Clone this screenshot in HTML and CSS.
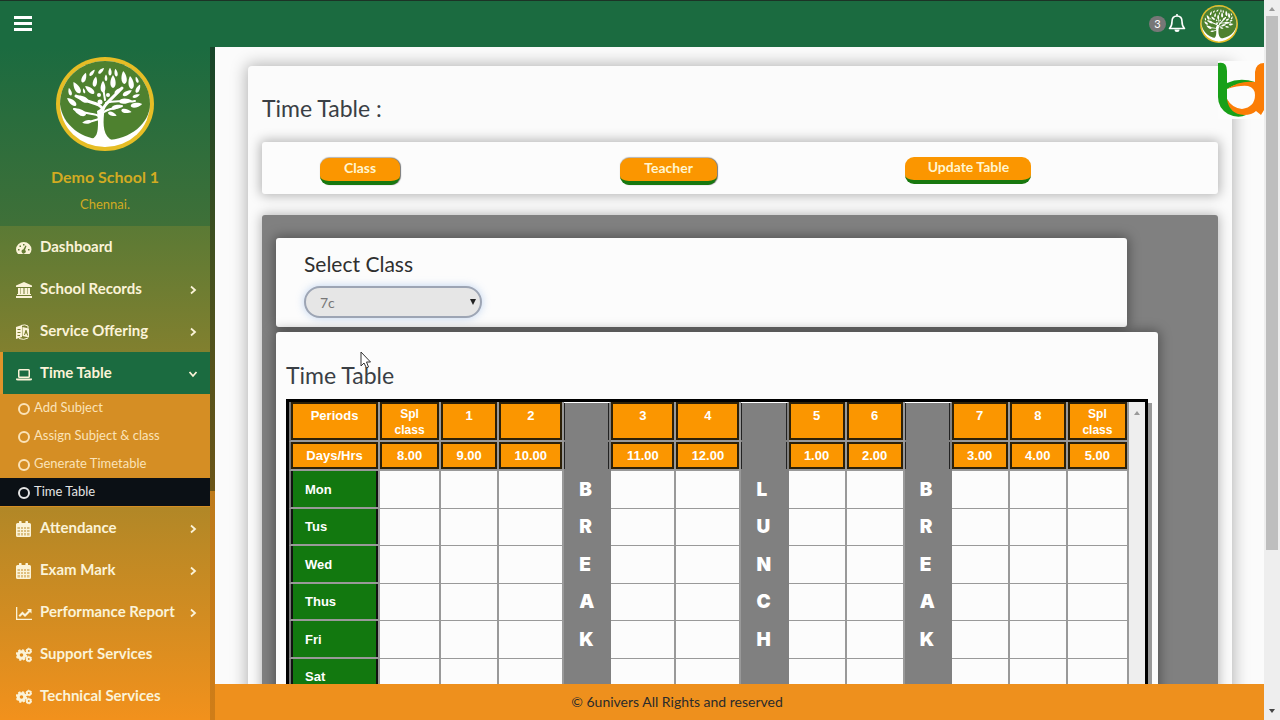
FILE: index.html
```html
<!DOCTYPE html>
<html lang="en">
<head>
<meta charset="utf-8">
<title>Time Table</title>
<link rel="stylesheet" href="styles.css">
</head>
<body>
<svg class="defs" aria-hidden="true">
  <symbol id="tree" viewBox="0 0 98 94">
    <ellipse cx="49" cy="47" rx="49" ry="47" fill="#e6bd25"/>
    <ellipse cx="49" cy="47" rx="45" ry="43" fill="#fff"/>
    <path d="M4 47C4 23 24 4 49 4S94 23 94 47C94 66 74 83 50 83S6 68 4 47Z" fill="#4e812f"/>
    <g fill="#fff">
      <path d="M33 83C41 81 42 76 42 65L41 54L46 51L48 57C47 68 47 79 57 84L49 90Z"/>
      <g fill="none" stroke="#fff" stroke-linecap="round">
        <path d="M45 60C46 48 52 46 66 31M47 53C44 45 34 47 20 39" stroke-width="3"/>
        <path d="M44 60C38 55 32 59 18 52M50 46C60 42 70 46 79 44M49 43L47 30M46 57C52 50 58 53 66 49M43 62L33 65" stroke-width="2"/>
      </g>
      <g>
        <path transform="translate(45 14) rotate(45) scale(.6)" d="M0-7C3-3 4 5 0 6C-4 5-3-3 0-7Z"/>
        <path transform="translate(54 15) scale(.6)" d="M0-7C3-3 4 5 0 6C-4 5-3-3 0-7Z"/>
        <path transform="translate(60 16) rotate(-8) scale(.6)" d="M0-7C3-3 4 5 0 6C-4 5-3-3 0-7Z"/>
        <path transform="translate(36 16) rotate(40) scale(.6)" d="M0-7C3-3 4 5 0 6C-4 5-3-3 0-7Z"/>
        <path transform="translate(28 21) rotate(20) scale(.8)" d="M0-7C3-3 4 5 0 6C-4 5-3-3 0-7Z"/>
        <path transform="translate(68 21) rotate(-6)" d="M0-7C3-3 4 5 0 6C-4 5-3-3 0-7Z"/>
        <path transform="translate(50 21) scale(.5)" d="M0-7C3-3 4 5 0 6C-4 5-3-3 0-7Z"/>
        <path transform="translate(81 23) rotate(-20) scale(.5)" d="M0-7C3-3 4 5 0 6C-4 5-3-3 0-7Z"/>
        <path transform="translate(75 26) rotate(-8)" d="M0-7C3-3 4 5 0 6C-4 5-3-3 0-7Z"/>
        <path transform="translate(39 25) rotate(10) scale(.8)" d="M0-7C3-3 4 5 0 6C-4 5-3-3 0-7Z"/>
        <path transform="translate(57 25)" d="M0-7C3-3 4 5 0 6C-4 5-3-3 0-7Z"/>
        <path transform="translate(21 31) rotate(-30)" d="M0-7C3-3 4 5 0 6C-4 5-3-3 0-7Z"/>
        <path transform="translate(47 30) scale(.9)" d="M0-7C3-3 4 5 0 6C-4 5-3-3 0-7Z"/>
        <path transform="translate(34 33) rotate(-50) scale(.9)" d="M0-7C3-3 4 5 0 6C-4 5-3-3 0-7Z"/>
        <path transform="translate(14 35) rotate(-15) scale(.6)" d="M0-7C3-3 4 5 0 6C-4 5-3-3 0-7Z"/>
        <path transform="translate(28 34) rotate(-15) scale(.4)" d="M0-7C3-3 4 5 0 6C-4 5-3-3 0-7Z"/>
        <path transform="translate(82 32) rotate(25) scale(.7)" d="M0-7C3-3 4 5 0 6C-4 5-3-3 0-7Z"/>
        <path transform="translate(71 36) rotate(60) scale(.8)" d="M0-7C3-3 4 5 0 6C-4 5-3-3 0-7Z"/>
        <path transform="translate(62 34) rotate(50) scale(.7)" d="M0-7C3-3 4 5 0 6C-4 5-3-3 0-7Z"/>
        <path transform="translate(80 39) rotate(70) scale(.6)" d="M0-7C3-3 4 5 0 6C-4 5-3-3 0-7Z"/>
        <path transform="translate(16 45) rotate(-50) scale(.9)" d="M0-7C3-3 4 5 0 6C-4 5-3-3 0-7Z"/>
        <path transform="translate(27 42) rotate(-62)" d="M0-7C3-3 4 5 0 6C-4 5-3-3 0-7Z"/>
        <path transform="translate(69 44) rotate(85)" d="M0-7C3-3 4 5 0 6C-4 5-3-3 0-7Z"/>
        <path transform="translate(80 48) rotate(80) scale(.9)" d="M0-7C3-3 4 5 0 6C-4 5-3-3 0-7Z"/>
        <path transform="translate(60 50) rotate(70) scale(.8)" d="M0-7C3-3 4 5 0 6C-4 5-3-3 0-7Z"/>
        <path transform="translate(70 54) rotate(100) scale(.8)" d="M0-7C3-3 4 5 0 6C-4 5-3-3 0-7Z"/>
        <path transform="translate(24 55) rotate(-62) scale(1.1)" d="M0-7C3-3 4 5 0 6C-4 5-3-3 0-7Z"/>
        <path transform="translate(31 65) rotate(-100) scale(.7)" d="M0-7C3-3 4 5 0 6C-4 5-3-3 0-7Z"/>
        <path transform="translate(56 57) rotate(110) scale(.7)" d="M0-7C3-3 4 5 0 6C-4 5-3-3 0-7Z"/>
        <circle cx="44" cy="45" r="2.5"/><circle cx="52" cy="38" r="2"/><circle cx="43" cy="38" r="2"/>
      </g>
    </g>
  </symbol>
  <symbol id="chev" viewBox="0 0 8 10"><path d="M2 1.500L6 5L2 8.500" fill="none" stroke="currentColor" stroke-width="1.800"/></symbol>
  <symbol id="cal" viewBox="0 0 16 16">
    <path fill-rule="evenodd" d="M1.500 2H3V1a1.300 1.300 0 0 1 2.600 0V2H9.400V1A1.300 1.300 0 0 1 12 1V2H13.500Q15 2 15 3.500V14.500Q15 16 13.500 16H1.500Q0 16 0 14.500V3.500Q0 2 1.500 2ZM1.500 6V8H4V6ZM5 6V8H7V6ZM8 6V8H10V6ZM11 6V8H13.500V6ZM1.500 9V11H4V9ZM5 9V11H7V9ZM8 9V11H10V9ZM11 9V11H13.500V9ZM1.500 12V14.500H4V12ZM5 12V14.500H7V12ZM8 12V14.500H10V12ZM11 12V14.500H13.500V12Z"/>
    <path d="M1 6H14V15H1Z" opacity=".5"/>
  </symbol>
  <symbol id="cogs" viewBox="0 0 16 16">
    <g fill="none" stroke="currentColor">
      <circle cx="5.500" cy="8" r="3.300" stroke-width="3"/>
      <circle cx="5.500" cy="8" r="5" stroke-width="1.600" stroke-dasharray="2.200 1.727"/>
      <circle cx="12.800" cy="4" r="1.900" stroke-width="1.900"/><circle cx="12.800" cy="4" r="2.800" stroke-width="1" stroke-dasharray="1.600 1.330"/>
      <circle cx="12.800" cy="12" r="1.900" stroke-width="1.900"/><circle cx="12.800" cy="12" r="2.800" stroke-width="1" stroke-dasharray="1.600 1.330"/>
    </g>
  </symbol>
</svg>

<div class="app">
  <header class="topbar">
    <button class="icon-button" aria-label="Toggle menu">
      <svg width="18" height="16" viewBox="0 0 18 16" fill="#fff"><path d="M0 0H18V3H0ZM0 6H18V9H0ZM0 12H18V15H0Z"/></svg>
    </button>
    <div class="account">
      <span class="count">3</span>
      <button class="icon-button" aria-label="Notifications">
        <svg width="18" height="20" viewBox="0 0 18 20" fill="none" stroke="#fff" stroke-width="1.600"><path d="M9 0V2M1.500 14.500Q4 12 4 7.500Q4 2 9 2T14 7.500Q14 12 16.500 14.500Z" stroke-linejoin="round"/><path d="M6.500 15.500H11.500Q11.500 18 9 18T6.500 15.500Z" fill="#fff" stroke="none"/></svg>
      </button>
      <svg class="avatar" viewBox="0 0 98 94" preserveAspectRatio="none"><use href="#tree"/></svg>
    </div>
  </header>

  <div class="body">
    <aside class="sidebar">
      <div class="brand">
        <svg width="98" height="94"><use href="#tree"/></svg>
        <div class="school">Demo School 1</div>
        <div class="city">Chennai.</div>
      </div>
      <nav class="menu">
        <a class="item" href="#"><svg class="icon" viewBox="0 0 16 16"><path fill-rule="evenodd" d="M2 14Q0 12 0 9.500A7.700 7.500 0 0 1 15.500 9.500Q15.500 12 13.500 14ZM2 9V10.500H3.500V9ZM3.500 5.500V7H5V5.500ZM7 4V5.500H8.500V4ZM12 9V10.500H13.500V9ZM9.500 5.500L7.300 9.500A2 2 0 1 0 9 10L10.500 6Z"/></svg><span>Dashboard</span></a>
        <a class="item" href="#"><svg class="icon" viewBox="0 0 16 16"><path d="M8 0L16 3.500V5H0V3.500ZM2 6H4.500V12H5V6H7.500V12H8.500V6H11V12H11.500V6H14V12H15V13H1V12H2ZM0 14H16V16H0Z"/></svg><span>School Records</span><svg class="chev"><use href="#chev"/></svg></a>
        <a class="item" href="#"><svg class="icon" viewBox="0 0 16 16"><path fill-rule="evenodd" d="M0 3L6 1V13L0 15ZM1.500 5V6H4.500V5ZM1.500 8V9H4.500V8ZM1.500 11V12H4V11Z"/><path fill-rule="evenodd" d="M6.500 3L13 4.500V13.500L6.500 12ZM9.500 6L8 11H9L9.500 9.500H10.500L11.200 11.500H12.200L10.500 6Z"/><path d="M5 1.500Q9 0 12 2V4M3 14.500Q8 16.500 12 14" fill="none" stroke="currentColor"/></svg><span>Service Offering</span><svg class="chev"><use href="#chev"/></svg></a>
        <a class="item active" href="#"><svg class="icon" viewBox="0 0 16 16"><path fill-rule="evenodd" d="M3.500 3H12.500Q14 3 14 4.500V10.500Q14 12 12.500 12H3.500Q2 12 2 10.500V4.500Q2 3 3.500 3ZM3.500 4.500V10.500H12.500V4.500ZM0 12.500H16V13.500Q16 14.500 14 14.500H2Q0 14.500 0 13.500Z"/></svg><span>Time Table</span><svg class="chev open"><use href="#chev"/></svg></a>
        <div class="submenu">
          <a href="#"><i></i>Add Subject</a>
          <a href="#"><i></i>Assign Subject &amp; class</a>
          <a href="#"><i></i>Generate Timetable</a>
          <a href="#" class="current"><i></i>Time Table</a>
        </div>
        <a class="item" href="#"><svg class="icon"><use href="#cal"/></svg><span>Attendance</span><svg class="chev"><use href="#chev"/></svg></a>
        <a class="item" href="#"><svg class="icon"><use href="#cal"/></svg><span>Exam Mark</span><svg class="chev"><use href="#chev"/></svg></a>
        <a class="item" href="#"><svg class="icon" viewBox="0 0 16 16"><path d="M0 2H1.300V13.700H16V15H0ZM2.500 10.500L6.500 6.500L9 9L12.500 5.500L11 4H15.500V8.500L14 7L9 12L6.500 9.500L4 12Z"/></svg><span>Performance Report</span><svg class="chev"><use href="#chev"/></svg></a>
        <a class="item" href="#"><svg class="icon"><use href="#cogs"/></svg><span>Support Services</span></a>
        <a class="item" href="#"><svg class="icon"><use href="#cogs"/></svg><span>Technical Services</span></a>
      </nav>
    </aside>
    <div class="sidebar-track"><div class="sidebar-thumb"></div></div>

    <div class="page">
      <main class="content">
        <section class="panel">
          <h1>Time Table :</h1>
          <div class="card actions">
            <div><button class="action raised">Class</button></div>
            <div><button class="action raised">Teacher</button></div>
            <div><button class="action">Update Table</button></div>
          </div>
          <div class="well">
            <div class="card chooser">
              <label for="class">Select Class</label>
              <div class="select">
                <select id="class"><option>7c</option></select>
                <svg width="6" height="6" viewBox="0 0 6 6"><path d="M0 0H6L3 6Z" fill="#222"/></svg>
              </div>
            </div>
            <div class="card schedule">
              <h2>Time Table</h2>
              <div class="frame">
                <table>
                  <colgroup>
                    <col class="days"><col class="spl"><col class="short"><col class="long"><col class="rest"><col class="long"><col class="long"><col class="rest"><col class="short"><col class="short"><col class="rest"><col class="short"><col class="short"><col class="spl">
                  </colgroup>
                  <thead>
                    <tr class="periods"><th>Periods</th><th class="two">Spl class</th><th>1</th><th>2</th><th class="gap"></th><th>3</th><th>4</th><th class="gap"></th><th>5</th><th>6</th><th class="gap"></th><th>7</th><th>8</th><th class="two">Spl class</th></tr>
                    <tr class="hours"><th>Days/Hrs</th><th>8.00</th><th>9.00</th><th>10.00</th><th class="gap"></th><th>11.00</th><th>12.00</th><th class="gap"></th><th>1.00</th><th>2.00</th><th class="gap"></th><th>3.00</th><th>4.00</th><th>5.00</th></tr>
                  </thead>
                  <tbody>
                    <tr><th>Mon</th><td></td><td></td><td></td><td class="gap">B</td><td></td><td></td><td class="gap">L</td><td></td><td></td><td class="gap">B</td><td></td><td></td><td></td></tr>
                    <tr><th>Tus</th><td></td><td></td><td></td><td class="gap">R</td><td></td><td></td><td class="gap">U</td><td></td><td></td><td class="gap">R</td><td></td><td></td><td></td></tr>
                    <tr><th>Wed</th><td></td><td></td><td></td><td class="gap">E</td><td></td><td></td><td class="gap">N</td><td></td><td></td><td class="gap">E</td><td></td><td></td><td></td></tr>
                    <tr><th>Thus</th><td></td><td></td><td></td><td class="gap">A</td><td></td><td></td><td class="gap">C</td><td></td><td></td><td class="gap">A</td><td></td><td></td><td></td></tr>
                    <tr><th>Fri</th><td></td><td></td><td></td><td class="gap">K</td><td></td><td></td><td class="gap">H</td><td></td><td></td><td class="gap">K</td><td></td><td></td><td></td></tr>
                    <tr><th>Sat</th><td></td><td></td><td></td><td class="gap"></td><td></td><td></td><td class="gap"></td><td></td><td></td><td class="gap"></td><td></td><td></td><td></td></tr>
                  </tbody>
                </table>
                <div class="table-scroll"><svg width="6" height="4" viewBox="0 0 6 4"><path d="M0 4L3 0L6 4Z" fill="#999"/></svg></div>
              </div>
            </div>
          </div>
        </section>
      </main>
      <footer>© 6univers All Rights and reserved</footer>
    </div>
  </div>
</div>

<div class="scrollbar">
  <svg width="8" height="4" viewBox="0 0 6 4"><path d="M0 4L3 0L6 4Z" fill="#999"/></svg>
  <div class="thumb"></div>
  <svg width="8" height="4" viewBox="0 0 6 4"><path d="M0 0L3 4L6 0Z" fill="#444"/></svg>
</div>

<svg class="watermark" width="46" height="58" viewBox="0 0 46 58">
  <path d="M0 2Q9 0 9 10V22Q22 16 37 21Q20 21 9 28V38Q12 48 28 54Q20 58 10 53Q0 47 0 36Z" fill="#18a018"/>
  <path d="M46 2Q38 2 37 11V21Q22 19 9 28Q22 24 30 25Q37 27 37 34Q37 46 24 48Q14 47 9 38Q11 53 26 54Q34 54 38 50L43 54L46 49Z" fill="#fb7d06"/>
</svg>
<svg class="cursor" width="12" height="18" viewBox="0 0 12 18"><path d="M1 1V15L4 12L6.500 17L8.500 16L6.500 11H10.500Z" fill="#fff" stroke="#333"/></svg>
</body>
</html>
```
FILE: styles.css
```css
* { box-sizing: border-box; }

body {
  margin: 0;
  height: 100vh;
  display: flex;
  overflow: hidden;
  background: #fbfbfb;
  color: #3a3f45;
  font-family: Lato, sans-serif;
}

.defs { position: absolute; width: 0; height: 0; }
h1, h2 { margin: 0; font-weight: 400; font-size: 23px; line-height: 26px; }
a { color: inherit; text-decoration: none; }
button { font: inherit; border: 0; cursor: pointer; }

.app { flex: 1; min-width: 0; display: flex; flex-direction: column; }

.topbar {
  height: 47px;
  flex: none;
  display: flex;
  align-items: center;
  justify-content: space-between;
  padding: 0 26px 0 14px;
  border-top: 1px solid #1c3326;
  background: #1b6b40;
}
.icon-button { display: flex; padding: 0; background: none; }
.account { display: flex; align-items: center; }
.count {
  width: 17px;
  height: 16px;
  margin-right: 2px;
  border-radius: 8px;
  background: #777;
  color: #fff;
  font-size: 11px;
  line-height: 16px;
  text-align: center;
}
.avatar { width: 38px; height: 38px; margin-left: 14px; }

.body { flex: 1; min-height: 0; display: flex; }

.sidebar {
  width: 210px;
  flex: none;
  display: flex;
  flex-direction: column;
  overflow: hidden;
  color: #fbf3d8;
}
.brand {
  flex: none;
  height: 179px;
  padding-top: 10px;
  text-align: center;
  color: #d2ab22;
  background: linear-gradient(#1b6b40, #3f7038);
}
.brand svg { display: block; margin: 0 auto; }
.school { margin-top: 15px; font-size: 16px; line-height: 22px; font-weight: 700; }
.city { margin-top: 6px; font-size: 13px; line-height: 20px; }

.menu { flex: 1 0 auto; background: linear-gradient(#5b7a35, #f2911c); }
.item {
  height: 42px;
  display: flex;
  align-items: center;
  gap: 8px;
  padding: 0 13px 2px 16px;
  font-size: 15px;
  font-weight: 700;
}
.item span { flex: 1; }
.icon { width: 16px; height: 16px; margin-top: 4px; fill: currentColor; }
.chev { width: 8px; height: 10px; margin-top: 4px; }
.chev.open { transform: rotate(90deg); }
.active {
  border-left: 3px solid #e0942a;
  padding-left: 13px;
  background: #1b6b40;
}
.submenu { padding-bottom: 1px; background: #d58e24; font-size: 13px; color: #fbe3b8; }
.submenu a { height: 28px; display: flex; align-items: center; gap: 4px; padding: 0 0 2px 18px; }
.submenu i { width: 12px; height: 12px; margin-top: 4px; border: 2px solid; border-radius: 50%; }
.submenu .current { background: #0b1015; color: #e4e4e4; }

.sidebar-track { width: 5px; flex: none; background: linear-gradient(#9a751f, #cf7d18); }
.sidebar-thumb { height: 66%; background: linear-gradient(#17452a, #45511f 50%, #6b5518); }

.page { flex: 1; min-width: 0; display: flex; flex-direction: column; }
.content { flex: 1; min-height: 0; overflow: hidden; padding: 19px 32px 0 33px; }

.panel {
  padding: 29px 14px 40px;
  border-radius: 4px;
  box-shadow: 0 0 16px 2px rgba(0, 0, 0, .28);
}
.card { border-radius: 3px; background: #fcfcfc; box-shadow: 0 0 12px 2px rgba(0, 0, 0, .28); }

.actions {
  display: grid;
  grid-template-columns: 300fr 284fr 313fr;
  align-items: start;
  margin-top: 21px;
  padding: 14px 0 9px 58px;
}
.action {
  height: 27px;
  padding: 0 22px 4px 23px;
  border-bottom: 4px solid #18780f;
  border-radius: 9px;
  background: #fb9600;
  color: #fff5cf;
  font-size: 14px;
  font-weight: 700;
}
.raised { margin-top: 2px; padding: 0 24px 4px; box-shadow: 1px 0 1px #777, 0 -1px 1px #bbb; }

.well {
  margin-top: 21px;
  padding: 23px 60px 40px 14px;
  border-radius: 3px;
  background: #808080;
  box-shadow: 0 0 12px 1px rgba(0, 0, 0, .28);
}
.well .card { box-shadow: 0 0 12px 2px rgba(0, 0, 0, .35); }
.chooser { margin-right: 31px; padding: 11px 28px 9px; }
.chooser label { display: block; font-size: 21px; line-height: 30px; color: #2f2f2f; }
.select { position: relative; width: 178px; margin-top: 7px; }
select {
  appearance: none;
  display: block;
  width: 100%;
  height: 32px;
  padding: 0 14px;
  border: 2px solid #9da5b4;
  border-radius: 16px;
  background: #e6e6e6;
  box-shadow: 0 0 8px rgba(100, 150, 220, .4);
  color: #777;
  font: 14px Lato, sans-serif;
}
.select svg { position: absolute; right: 6px; top: 13px; }

.schedule { margin-top: 5px; padding: 30px 10px 20px; }
.frame {
  display: flex;
  margin-top: 11px;
  border: 3px solid #000;
  border-bottom-width: 1px;
  box-shadow: 4px 4px 0 #999;
}
.table-scroll {
  width: 16px;
  flex: none;
  padding-top: 5px;
  background: #eee;
  text-align: center;
  line-height: 4px;
}

table {
  flex: 1;
  min-width: 0;
  table-layout: fixed;
  border-collapse: separate;
  border-spacing: 0;
  font-family: "Liberation Sans", Arial, sans-serif;
  font-size: 13px;
  color: #fff;
}
.days { width: 91px; }
.spl { width: 61px; }
.short { width: 58px; }
.long { width: 65px; }
.rest { width: 47px; }
th, td { padding: 0; border-right: 2px solid #999; border-bottom: 1px solid #999; }
th { border-bottom-width: 2px; }
thead th { background: #fb9600; box-shadow: inset 0 0 0 2px #2c2008; }
th:first-child { border-left: 2px solid #777; }
.periods { height: 40px; }
.hours { height: 29px; }
.periods th { padding-top: 6px; vertical-align: top; line-height: 16px; }
.periods .two { padding: 4px 12px 0; font-size: 12px; }
tbody tr { height: 38px; }
tbody tr:nth-child(even) { height: 37px; }
tbody th {
  padding-left: 14px;
  text-align: left;
  background: #12780f;
  box-shadow: inset 2px 0 #111, inset -2px 0 #111;
}
.gap { border-color: #808080; background: #808080; }
thead .gap { box-shadow: inset 1px 0 #222, inset -1px 0 #222; }
.periods .gap { border-top: 1px solid #fff; }
tbody .gap {
  padding-left: 15px;
  font-family: Inter, sans-serif;
  font-size: 19px;
  font-weight: 900;
  line-height: 24px;
}

footer {
  height: 36px;
  flex: none;
  padding-right: 125px;
  background: #ee901d;
  color: #2b2b2b;
  font-size: 14px;
  line-height: 36px;
  text-align: center;
}

.scrollbar {
  width: 16px;
  flex: none;
  display: flex;
  flex-direction: column;
  align-items: center;
  justify-content: space-between;
  padding: 7px 0;
  background: #eee;
}
.thumb { width: 12px; flex: 0 0 534px; margin: 5px 0 auto; background: #bebebe; }

.watermark { position: absolute; right: 16px; top: 61px; background: #fcfcfc; }
.cursor { position: absolute; left: 360px; top: 351px; }
```
